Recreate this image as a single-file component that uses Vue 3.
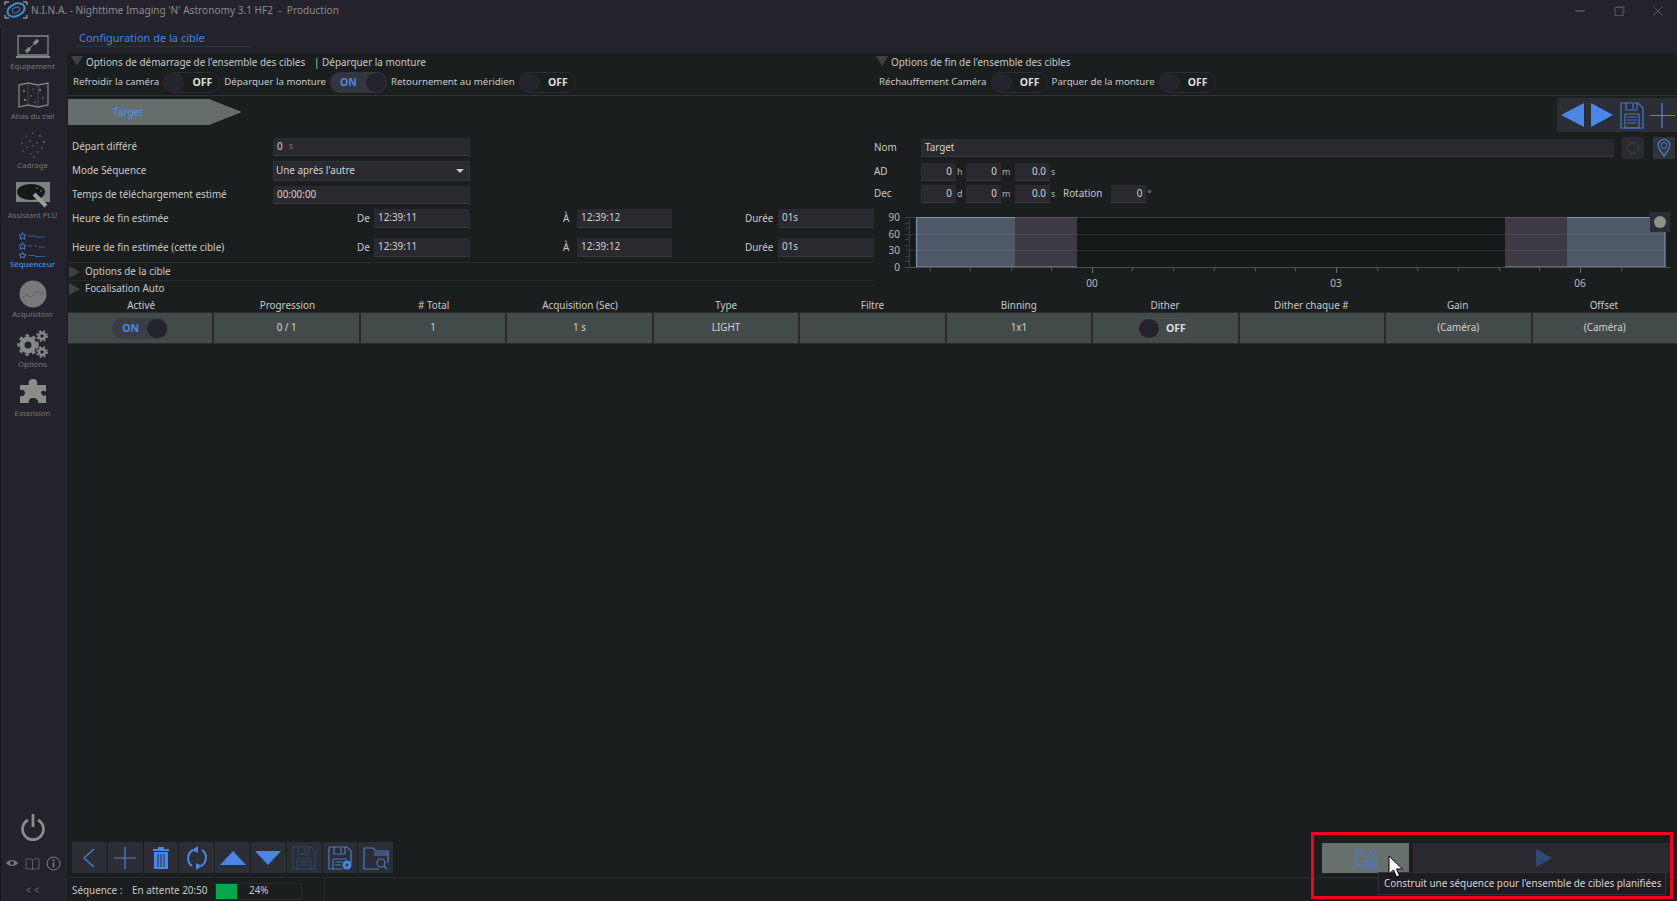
<script setup>
const headers = ['Activé','Progression','# Total','Acquisition (Sec)','Type','Filtre','Binning','Dither','Dither chaque #','Gain','Offset']
const cells = ['on','0 / 1','1','1 s','LIGHT','','1x1','off','','(Caméra)','(Caméra)']
const hTicks = [1051,1132,1173,1214,1255,1295,1377,1417,1458,1499,1539,1621,930,970,1011]
const hTicksBig = [1092,1336,1580]
const vTicks = [223,228,239,245,256,261]
</script>

<template>
  <div class="app">
    <header class="titlebar">
      <svg class="logo" width="26" height="20" viewBox="0 0 26 20">
        <path d="M2 5V2h4M20 2h4v3M24 15v3h-4M6 18H2v-3" fill="none" stroke="#b9c2cc" stroke-width="1"/>
        <ellipse cx="13" cy="10" rx="9" ry="6" transform="rotate(-25 13 10)" fill="none" stroke="#3f8fd0" stroke-width="2"/>
        <ellipse cx="13" cy="10" rx="4" ry="2.5" transform="rotate(-25 13 10)" fill="none" stroke="#2a66a8" stroke-width="1.4"/>
      </svg>
      <span class="app-title">N.I.N.A. - Nighttime Imaging 'N' Astronomy 3.1 HF2 &nbsp;-&nbsp; Production</span>
      <div class="winctl">
        <svg width="12" height="12" viewBox="0 0 12 12"><path d="M1 6h10" stroke="#4c4c52" stroke-width="2"/></svg>
        <svg width="12" height="12" viewBox="0 0 12 12"><path d="M2 2.500h8v8H2z" fill="none" stroke="#55555a" stroke-width="1.200"/><path d="M3.500 1.500h7.500v7" fill="none" stroke="#3c3c42"/></svg>
        <svg width="12" height="12" viewBox="0 0 12 12"><path d="M1.500 1.500l9 9M10.500 1.500l-9 9" stroke="#5a5a5f"/></svg>
      </div>
    </header>

    <div class="body">
      <nav class="sidebar">
        <div class="nav-item">
          <svg width="36" height="28" viewBox="0 0 36 28"><path d="M4 4h30v19H4z" fill="none" stroke="#85888a" stroke-width="1.300"/><path d="M2 24h34v2H2z" fill="#85888a"/><g fill="none" stroke="#85888a"><path d="M12 20l4-4M20 12l4-4" stroke-width="3.400"/><path d="M15 17l6-6" stroke-width="1"/></g></svg>
          <span>Équipement</span>
        </div>
        <div class="nav-item">
          <svg width="36" height="28" viewBox="0 0 36 28"><path d="M4 3l9-2 10 2 10-2v22l-10 2-10-2-9 2z" fill="none" stroke="#7f8280" stroke-width="1.300"/><path d="M13 1v22M23 3v22" stroke="#55575a" stroke-width=".7"/><g fill="#a0a2a0"><circle cx="9" cy="9" r=".9"/><circle cx="16" cy="14" r=".7"/><circle cx="25" cy="8" r=".9"/><circle cx="28" cy="16" r=".7"/><circle cx="10" cy="18" r=".9"/><circle cx="20" cy="20" r=".7"/><circle cx="18" cy="7" r=".6"/></g></svg>
          <span>Atlas du ciel</span>
        </div>
        <div class="nav-item">
          <svg width="36" height="28" viewBox="0 0 36 28"><g fill="#6d6f6f"><circle cx="18" cy="2" r=".8"/><circle cx="11" cy="5" r=".8"/><circle cx="25" cy="5" r="1"/><circle cx="7" cy="12" r=".8"/><circle cx="15" cy="10" r=".8"/><circle cx="22" cy="12" r=".8"/><circle cx="29" cy="11" r="1"/><circle cx="12" cy="16" r=".8"/><circle cx="18" cy="15" r=".8"/><circle cx="27" cy="17" r=".8"/><circle cx="8" cy="20" r=".8"/><circle cx="16" cy="23" r=".8"/><circle cx="23" cy="21" r=".8"/><circle cx="19" cy="26" r=".8"/></g></svg>
          <span>Cadrage</span>
        </div>
        <div class="nav-item">
          <svg width="36" height="28" viewBox="0 0 36 28"><path d="M2 1h34v20H2z" fill="#7d8180"/><ellipse cx="17" cy="11" rx="14" ry="8" fill="#15181a"/><path d="M20 13l12 12" stroke="#9a9d9c" stroke-width="4"/><circle cx="23" cy="7" r=".7" fill="#9a9d9c"/><circle cx="27" cy="10" r=".7" fill="#9a9d9c"/></svg>
          <span>Assistant PLU</span>
        </div>
        <div class="nav-item active">
          <svg width="36" height="28" viewBox="0 0 36 28"><g fill="none" stroke="#4a82d8" stroke-width=".9"><path d="M8.500 2.500l1 2.400 2.600.2-2 1.700.6 2.500-2.200-1.300-2.200 1.300.6-2.500-2-1.700 2.600-.2z"/><path d="M8.500 12.500l1 2.400 2.600.2-2 1.700.6 2.500-2.200-1.300-2.200 1.300.6-2.500-2-1.700 2.600-.2z"/><path d="M8.500 22l1 2.400 2.600.2-2 1.700.5 1.700-2.100-.8-2.100.8.500-1.700-2-1.700 2.600-.2z"/></g><g stroke="#3f6cb4" stroke-width=".8"><path d="M14 6h7M21 7h10M14 16h4M20 16h3M25 17h6M14 25.500h7M21 26.500h10"/></g></svg>
          <span>Séquenceur</span>
        </div>
        <div class="nav-item">
          <svg width="36" height="28" viewBox="0 0 36 28"><circle cx="18" cy="14" r="13.500" fill="#777a78"/><path d="M7 18l5-3 4 2 6-6 4 3 4-2" fill="none" stroke="#5e615f" stroke-width="1"/></svg>
          <span>Acquisition</span>
        </div>
        <div class="nav-item">
          <svg width="36" height="28" viewBox="0 0 36 28"><g fill="none" stroke="#85888a"><circle cx="13" cy="15" r="6" stroke-width="5"/><circle cx="13" cy="15" r="9.500" stroke-width="2.500" stroke-dasharray="3.500 3.500"/><circle cx="27" cy="6" r="3" stroke-width="2.500"/><circle cx="27" cy="6" r="5" stroke-width="1.800" stroke-dasharray="2 2"/><circle cx="27" cy="22" r="3" stroke-width="2.500"/><circle cx="27" cy="22" r="5" stroke-width="1.800" stroke-dasharray="2 2"/></g></svg>
          <span>Options</span>
        </div>
        <div class="nav-item">
          <svg width="36" height="28" viewBox="0 0 36 28"><path d="M18 0c3 0 5 2 4 6h9v7c-3-2-4-1-5 0 0 3 3 5 5 3v8h-8c1-3-2-5-5-5s-5 2-4 5H5v-7c3 1 5-1 5-3s-2-4-5-3V6h9c-1-4 1-6 4-6z" fill="#8b8e88"/></svg>
          <span>Extension</span>
        </div>

        <div class="nav-foot">
          <svg class="power" width="26" height="28" viewBox="0 0 26 28"><path d="M8 7a10.500 10.500 0 1 0 10 0" fill="none" stroke="#8a8d8b" stroke-width="2.800"/><path d="M13 1v13" stroke="#8a8d8b" stroke-width="2.800"/></svg>
          <div class="mini">
            <svg width="14" height="12" viewBox="0 0 14 12"><path d="M1 6c3-4 9-4 12 0-3 4-9 4-12 0z" fill="#777a78"/><circle cx="7" cy="6" r="2" fill="#24232b"/></svg>
            <svg width="15" height="13" viewBox="0 0 15 13"><path d="M7.500 3C6 1.500 3 1.500 1 2v10c2-.5 5-.5 6.500 1 1.500-1.500 4.500-1.500 6.500-1V2c-2-.5-5-.5-6.500 1zM7.500 3v10" fill="none" stroke="#5f6260"/></svg>
            <svg width="15" height="15" viewBox="0 0 15 15"><circle cx="7.500" cy="7.500" r="6.500" fill="none" stroke="#7c7f7d"/><path d="M7.500 6.500v5" stroke="#7c7f7d" stroke-width="1.500"/><circle cx="7.500" cy="4.300" r="1" fill="#7c7f7d"/></svg>
          </div>
          <div class="collapse">&lt; &lt;</div>
        </div>
      </nav>

      <main class="main">
        <div class="tabs"><span class="tab-title">Configuration de la cible</span></div>

        <section class="opts">
          <div class="opts-block start">
            <div class="opts-head"><i class="tri-down"></i><span>Options de démarrage de l'ensemble des cibles</span><span class="pipe">| Déparquer la monture</span></div>
            <div class="opts-row">
              <span>Refroidir la caméra</span>
              <span class="toggle off"><i></i><b>OFF</b></span>
              <span>Déparquer la monture</span>
              <span class="toggle on"><b>ON</b><i></i></span>
              <span>Retournement au méridien</span>
              <span class="toggle off"><i></i><b>OFF</b></span>
            </div>
          </div>
          <div class="opts-block end">
            <div class="opts-head"><i class="tri-down"></i><span>Options de fin de l'ensemble des cibles</span></div>
            <div class="opts-row">
              <span>Réchauffement Caméra</span>
              <span class="toggle off"><i></i><b>OFF</b></span>
              <span>Parquer de la monture</span>
              <span class="toggle off"><i></i><b>OFF</b></span>
            </div>
          </div>
        </section>

        <section class="target-bar">
          <div class="target-tab"><span>Target</span></div>
          <div class="target-tools">
            <svg width="30" height="34" viewBox="0 0 30 34"><path d="M27 5v24L4 17z" fill="#4a86e8"/></svg>
            <svg width="30" height="34" viewBox="0 0 30 34"><path d="M4 5v24l22-12z" fill="#4a86e8"/></svg>
            <svg width="30" height="34" viewBox="0 0 30 34"><g fill="none" stroke="#4478c8" stroke-width="1.200"><path d="M4 5h17l5 5v20H4z"/><path d="M9 5v7h11V5M16 6v5"/><path d="M8 16h14v14H8zM10 19h10M10 22h10M10 25h10"/></g></svg>
            <svg width="30" height="34" viewBox="0 0 30 34"><path d="M15 5v25M3 17.500h25" stroke="#4a86e8" stroke-width="1.200"/></svg>
          </div>
        </section>

        <section class="form">
          <div class="form-left">
            <div class="frow h18"><label>Départ différé</label><div class="inp wide"><span>0</span><small>s</small></div></div>
            <div class="frow h20 mt5"><label>Mode Séquence</label><div class="inp wide select"><span>Une après l'autre</span><i class="caret"></i></div></div>
            <div class="frow h18 mt5"><label>Temps de téléchargement estimé</label><div class="inp wide"><span>00:00:00</span></div></div>
            <div class="frow h19 mt5">
              <label>Heure de fin estimée</label><em class="de">De</em><div class="inp c1">12:39:11</div><em class="a">À</em><div class="inp c2">12:39:12</div><em class="du">Durée</em><div class="inp c3">01s</div>
            </div>
            <div class="frow h19 mt10">
              <label>Heure de fin estimée (cette cible)</label><em class="de">De</em><div class="inp c1">12:39:11</div><em class="a">À</em><div class="inp c2">12:39:12</div><em class="du">Durée</em><div class="inp c3">01s</div>
            </div>
            <div class="exp e1"><i class="tri-right"></i><span>Options de la cible</span></div>
            <div class="exp e2"><i class="tri-right"></i><span>Focalisation Auto</span></div>
          </div>

          <div class="form-right">
            <div class="rrow first">
              <label class="rl">Nom</label>
              <div class="inp name">Target</div>
              <button class="sq dim"><svg width="14" height="14" viewBox="0 0 14 14"><circle cx="7" cy="7" r="5.500" fill="none" stroke="#4a5a74" stroke-dasharray="1 1.500"/></svg></button>
              <button class="sq"><svg width="14" height="18" viewBox="0 0 14 18"><path d="M7 17C4 12 1 10 1 6.500a6 6 0 0 1 12 0C13 10 10 12 7 17z" fill="none" stroke="#4a82d8" stroke-width="1.200"/><circle cx="7" cy="6.500" r="3" fill="none" stroke="#4a82d8"/></svg></button>
            </div>
            <div class="rrow">
              <label class="rl">AD</label>
              <div class="inp num">0</div><small class="u">h</small>
              <div class="inp num">0</div><small class="u um">m</small>
              <div class="inp num">0.0</div><small class="u">s</small>
            </div>
            <div class="rrow">
              <label class="rl">Dec</label>
              <div class="inp num">0</div><small class="u">d</small>
              <div class="inp num">0</div><small class="u um">m</small>
              <div class="inp num">0.0</div><small class="u">s</small>
              <span class="rot">Rotation</span>
              <div class="inp num">0</div><small class="u">°</small>
            </div>
            <div class="chart-area">
              <svg class="chart" width="803" height="86" viewBox="874 212 803 86">
                <rect x="909" y="217" width="756" height="50" fill="#141a1a"/>
                <rect x="916" y="217" width="99" height="50" fill="#4e5868"/>
                <rect x="1015" y="217" width="62" height="50" fill="#3d3a44"/>
                <rect x="1505" y="217" width="62" height="50" fill="#3d3a44"/>
                <rect x="1567" y="217" width="98" height="50" fill="#4e5868"/>
                <path d="M905 234.500h760M905 250.500h760" stroke="#332d33" stroke-width="1"/>
                <path d="M916 234.500h99M916 250.500h99M1567 234.500h98M1567 250.500h98" stroke="#5d6676"/>
                <path d="M1015 234.500h62M1015 250.500h62M1505 234.500h62M1505 250.500h62" stroke="#4a4650"/>
                <path d="M905 217.500h760" stroke="#3e4044"/>
                <path d="M1015 217.500h62M1505 217.500h62" stroke="#55555e"/>
                <path d="M1015 266.500h62M1505 266.500h62" stroke="#5f6a78"/>
                <path d="M916.500 217.500h98.500M916.500 217.500v49.500h98.500M1567 267h98V217.500h-98" fill="none" stroke="#7f90a0" stroke-width="1.200"/>
                <path d="M905 267.500h765" stroke="#4a5052" stroke-width="1"/>
                <path d="M909.500 217v50" stroke="#3a3e40"/>
                <path v-for="t in vTicks" :key="t" :d="`M905 ${t}.500h4`" stroke="#384040"/>
                <path v-for="t in hTicks" :key="t" :d="`M${t}.500 268v3`" stroke="#555a5c"/>
                <path v-for="t in hTicksBig" :key="t" :d="`M${t}.500 268v5`" stroke="#666c6e"/>
                <g class="axis">
                  <text x="900" y="221" text-anchor="end">90</text>
                  <text x="900" y="238" text-anchor="end">60</text>
                  <text x="900" y="254" text-anchor="end">30</text>
                  <text x="900" y="271" text-anchor="end">0</text>
                  <text x="1092" y="287" text-anchor="middle">00</text>
                  <text x="1336" y="287" text-anchor="middle">03</text>
                  <text x="1580" y="287" text-anchor="middle">06</text>
                </g>
              </svg>
              <button class="chart-btn"><i></i></button>
            </div>
          </div>
        </section>

        <section class="table">
          <div class="t-head"><span v-for="h in headers" :key="h">{{ h }}</span></div>
          <div class="t-row">
            <div v-for="(c, i) in cells" :key="i" class="t-cell">
              <span v-if="c === 'on'" class="toggle on cell"><b>ON</b><i></i></span>
              <span v-else-if="c === 'off'" class="toggle off cell dith"><i></i><b>OFF</b></span>
              <template v-else>{{ c }}</template>
            </div>
          </div>
        </section>

        <div class="spacer"></div>

        <section class="toolbar">
          <div class="tools">
            <button><svg width="20" height="24" viewBox="0 0 20 24"><path d="M15 3L5 12l10 9" fill="none" stroke="#4a82d8" stroke-width="1.200"/></svg></button>
            <button><svg width="24" height="24" viewBox="0 0 24 24"><path d="M12 1v22M1 12h22" stroke="#4a82d8" stroke-width="1.200"/></svg></button>
            <button><svg width="18" height="24" viewBox="0 0 18 24"><path d="M6 1h6v2h5v2H1V3h5zM2 6h14v17H2z" fill="#4a86e8"/><path d="M6 8v13M9 8v13M12 8v13" stroke="#2c2e36"/></svg></button>
            <button><svg width="24" height="24" viewBox="0 0 24 24"><path d="M8 4A9.500 9.500 0 0 0 7 20M16 20A9.500 9.500 0 0 0 17 4" fill="none" stroke="#4a86e8" stroke-width="2"/><path d="M13 0v7l-6-3zM11 24v-7l6 3z" fill="#4a86e8"/></svg></button>
            <button><svg width="28" height="16" viewBox="0 0 28 16"><path d="M14 1l13 14H1z" fill="#4a86e8"/></svg></button>
            <button><svg width="28" height="16" viewBox="0 0 28 16"><path d="M14 15L27 1H1z" fill="#4a86e8"/></svg></button>
            <button><svg width="24" height="24" viewBox="0 0 24 24"><g fill="none" stroke="#2d4468" stroke-width="1.200"><path d="M1 1h18l4 4v18H1z"/><path d="M6 1v7h11V1M13 2v5M5 13h14v10H5zM7 16h10M7 19h10"/></g></svg></button>
            <button><svg width="24" height="24" viewBox="0 0 24 24"><g fill="none" stroke="#4a7ac4" stroke-width="1.200"><path d="M1 1h18l4 4v12M15 23H1V1M6 1v7h11V1M13 2v5M5 23V13h14M7 16h8M7 19h6"/></g><circle cx="19" cy="19" r="4.500" fill="#4a86e8"/><path d="M19 17v4M17 19h4" stroke="#2c2e36"/></svg></button>
            <button><svg width="26" height="24" viewBox="0 0 26 24"><g fill="none" stroke="#4a7ac4" stroke-width="1.200"><path d="M1 2h9l3 3h12v12M16 23H1V2M11 7h14M11 9h14"/><circle cx="18" cy="17" r="4"/><path d="M21 20l3 3"/></g></svg></button>
          </div>
          <div class="actions">
            <button class="build"><svg width="24" height="24" viewBox="0 0 24 24"><g fill="none" stroke="#4a7ac8" stroke-width="1.100"><path d="M2 4h14M2 4v15h12M2 7h8"/><path d="M9 15l10-11 3 2-10 11z"/><path d="M22 11v12H9z"/><path d="M19 17v3h-4z"/></g></svg></button>
            <button class="play"><svg width="18" height="18" viewBox="0 0 18 18"><path d="M1 0v18l16-9z" fill="#2f4a78"/></svg></button>
          </div>
        </section>

        <footer class="status">
          <span class="s1">Séquence :</span>
          <span class="s2">En attente 20:50</span>
          <div class="progress"><i></i><span>24%</span></div>
          <div class="sep"></div>
        </footer>
      </main>
    </div>

    <div class="highlight"></div>
    <div class="tooltip">Construit une séquence pour l'ensemble de cibles planifiées</div>
    <svg class="cursor" width="16" height="24" viewBox="0 0 16 24"><path d="M1 1v18l4.500-4 3 7 3-1.300-3-6.700H14.500z" fill="#fff" stroke="#000"/></svg>
  </div>
</template>

<style>
html, body { margin: 0; background: #1b1e1e; overflow: hidden; }
</style>

<style scoped>
.app { position: relative; width: 1677px; height: 901px; display: flex; flex-direction: column; background: #1b1e1e; color: #c8cac8; font: 9.900px/1.2 "Noto Sans", "Open Sans", sans-serif; overflow: hidden; }
button { border: 0; padding: 0; margin: 0; font: inherit; display: flex; align-items: center; justify-content: center; }
label, em { font-style: normal; }

.titlebar { height: 28px; flex: none; display: flex; align-items: center; background: #24232b; padding-left: 3px; box-sizing: border-box; padding-bottom: 8px; }
.logo { flex: none; }
.app-title { margin-left: 2px; color: #8b8b8f; font-size: 10.100px; white-space: nowrap; }
.winctl { margin-left: auto; display: flex; gap: 27px; margin-right: 13px; margin-top: 2px; }

.body { flex: 1; display: flex; min-height: 0; }
.sidebar { width: 67px; flex: none; background: #24232b; border-left: 1px solid #17171b; box-sizing: border-box; display: flex; flex-direction: column; align-items: center; padding: 4px 3px 0 0; }
.nav-item { height: 49.6px; flex: none; display: flex; flex-direction: column; align-items: center; color: #767776; font-size: 7.800px; white-space: nowrap; }
.nav-item svg { height: 28px; flex: none; margin-bottom: 2px; }
.nav-item.active { color: #4a82d8; font-weight: 600; }
.nav-foot { margin-top: auto; display: flex; flex-direction: column; align-items: center; }
.power { margin-bottom: 14px; }
.mini { display: flex; align-items: center; gap: 6px; height: 16px; }
.collapse { color: #6a6a6a; font-size: 10px; margin: 13px 0 3px; height: 14px; }

.main { flex: 1; min-width: 0; display: flex; flex-direction: column; }
.tabs { height: 25px; flex: none; background: #24232b; padding-left: 9px; box-sizing: border-box; }
.tab-title { display: block; color: #4a82d8; font-size: 11px; height: 19px; line-height: 20px; width: 174px; padding-left: 3px; box-sizing: border-box; border-bottom: 1px solid #33333a; }

.opts { height: 43px; flex: none; display: flex; border-bottom: 1px solid #33323a; box-sizing: border-box; padding-top: 1px; }
.opts-block.start { width: 807px; padding-left: 4px; }
.opts-block.end { padding-left: 2px; }
.opts-block { box-sizing: border-box; }
.opts-head { height: 17px; display: flex; align-items: center; }
.tri-down { width: 0; height: 0; border-left: 6px solid transparent; border-right: 6px solid transparent; border-top: 10px solid #3d4044; margin-right: 3px; margin-top: -3px; }
.pipe { margin-left: 9px; }
.opts-row { display: flex; align-items: center; gap: 4px; height: 22px; padding-left: 2px; font-size: 9.700px; }
.end .opts-row { padding-left: 3px; }
.toggle { display: inline-flex; align-items: center; width: 57px; height: 21px; border-radius: 11px; box-sizing: border-box; border: 1px solid #2e2d36; flex: none; }
.toggle i { display: block; width: 20px; height: 19px; border-radius: 50%; background: #25242c; flex: none; }
.toggle b { font-size: 10.500px; font-weight: 700; color: #dcdcdc; }
.toggle.off { justify-content: space-between; padding-right: 7px; }
.toggle.on { background: #33363e; justify-content: space-between; border-color: #33363e; padding-left: 9px; }
.toggle.on b { color: #4a86e8; }
.toggle.on i { background: #24232b; }

.target-bar { height: 42px; flex: none; display: flex; justify-content: space-between; align-items: flex-start; padding-left: 1px; }
.target-tab { margin-top: 3px; width: 174px; height: 26px; background: #656e6c; clip-path: polygon(0 0, 141px 0, 100% 50%, 141px 100%, 0 100%); display: flex; align-items: center; padding-left: 45px; box-sizing: border-box; color: #5a90e8; font-size: 10px; }
.target-tools { width: 120px; height: 34px; margin-top: 2px; background: #2c2e36; display: flex; align-items: center; }

.form { height: 160px; flex: none; display: flex; }
.form-left { width: 807px; flex: none; padding-left: 5px; box-sizing: border-box; }
.frow { display: grid; grid-template-columns: 201px 84px 17px 96px 93px 14px 95px 73px 33px 96px; }
.frow > * { display: flex; align-items: center; white-space: nowrap; }
.frow .wide { grid-column: 2 / 5; }
.h18 { height: 18px; }
.h20 { height: 20px; }
.h19 { height: 19px; }
.mt5 { margin-top: 5px; }
.mt10 { margin-top: 10px; }
.de { grid-column: 3; }
.a { grid-column: 6; }
.du { grid-column: 9; }
.c1 { grid-column: 4; }
.c2 { grid-column: 7; }
.c3 { grid-column: 10; }
.inp { background: #2a2930; border-bottom: 1px solid #37373d; box-sizing: border-box; padding: 0 4px; color: #d0d2d0; display: flex; align-items: center; white-space: nowrap; }
.inp small { color: #777; margin-left: 6px; font-size: 9px; }
.select { justify-content: space-between; border: 1px solid #33333a; padding: 0 5px 0 2px; }
.caret { width: 0; height: 0; border-left: 4px solid transparent; border-right: 4px solid transparent; border-top: 4px solid #c8cac8; }

.exp { display: flex; align-items: center; margin-left: -4px; border-top: 1px solid #2a2930; }
.exp.e1 { margin-top: 5px; height: 17px; }
.exp.e2 { height: 19px; padding-bottom: 2px; box-sizing: border-box; }
.tri-right { width: 0; height: 0; border-top: 6px solid transparent; border-bottom: 6px solid transparent; border-left: 11px solid #3d4044; margin: 0 5px 0 1px; }

.form-right { flex: 1; min-width: 0; box-sizing: border-box; }
.rrow { display: flex; align-items: center; height: 18px; margin-top: 4px; }
.rrow.first { height: 22px; margin-top: -1px; }
.rl { width: 47px; flex: none; }
.name { width: 693px; height: 18px; flex: none; }
.sq { width: 22px; height: 22px; background: #33343a; margin-left: 8px; flex: none; }
.sq.dim { background: #2a2a30; }
.sq + .sq { margin-left: 9px; }
.num { width: 35px; height: 18px; justify-content: flex-end; flex: none; }
.u { width: 10px; color: #b0b0b0; font-size: 9px; padding-left: 1px; box-sizing: border-box; flex: none; }
.um { width: 14px; }
.rot { margin: 0 9px 0 3px; }

.chart-area { position: relative; margin-top: 9px; width: 803px; height: 86px; }
.chart { display: block; }
.axis text { fill: #b8bab8; font: 10px "Noto Sans", sans-serif; }
.chart-btn { position: absolute; left: 776px; top: 0; width: 20px; height: 20px; background: #2c2e36; }
.chart-btn i { width: 12px; height: 12px; border-radius: 50%; background: #8f918d; display: block; }

.table { flex: none; }
.t-head { display: grid; grid-template-columns: repeat(11, 1fr); height: 14px; padding-top: 1px; box-sizing: border-box; align-items: center; text-align: center; margin-left: 1px; }
.t-row { display: grid; grid-template-columns: repeat(11, 1fr); height: 32px; background: #2a2930; padding: 1px 0; box-sizing: border-box; column-gap: 2px; margin-left: 1px; }
.t-cell { background: #434a4a; display: flex; align-items: center; justify-content: center; color: #d0d2d0; }
.toggle.cell { width: 56px; height: 21px; }
.toggle.cell.on { background: #3a3e44; border-color: transparent; }
.toggle.cell.dith { border-color: #4a4d50; width: 55px; padding-right: 6px; }
.toggle.cell i { background: #24232b; }

.spacer { flex: 1; }
.toolbar { height: 31px; flex: none; display: flex; justify-content: space-between; padding-left: 5px; }
.tools { display: flex; gap: 1px; }
.tools button { width: 34.800px; height: 31px; background: #2c2e36; }
.actions { display: flex; gap: 4px; margin-right: 3px; padding-top: 1px; }
.build { width: 87px; height: 30px; background: #68706e; border-radius: 1px; }
.play { width: 261px; height: 30px; background: #2a2930; }

.status { height: 24px; margin-top: 4px; flex: none; border-top: 1px solid #2a2930; display: flex; align-items: center; padding: 3px 0 0 5px; position: relative; box-sizing: border-box; white-space: nowrap; }
.s1 { width: 60px; }
.s2 { width: 83px; }
.progress { width: 87px; height: 17px; border: 1px solid #2a2930; box-sizing: border-box; display: flex; align-items: center; }
.progress i { display: block; width: 21px; height: 100%; background: #07a64a; }
.progress span { margin-left: 12px; }
.sep { position: absolute; left: 257px; top: 0; width: 1px; height: 24px; background: #2a2930; }

.highlight { position: absolute; left: 1311px; top: 832px; width: 362px; height: 67px; border: 3px solid #f5001e; box-sizing: border-box; pointer-events: none; }
.tooltip { position: absolute; left: 1378px; top: 872px; width: 288px; height: 23px; box-sizing: border-box; background: #1c1c22; border: 1px solid #33323a; color: #d6d6d6; display: flex; align-items: center; padding-left: 5px; white-space: nowrap; }
.cursor { position: absolute; left: 1388px; top: 855px; }
</style>
